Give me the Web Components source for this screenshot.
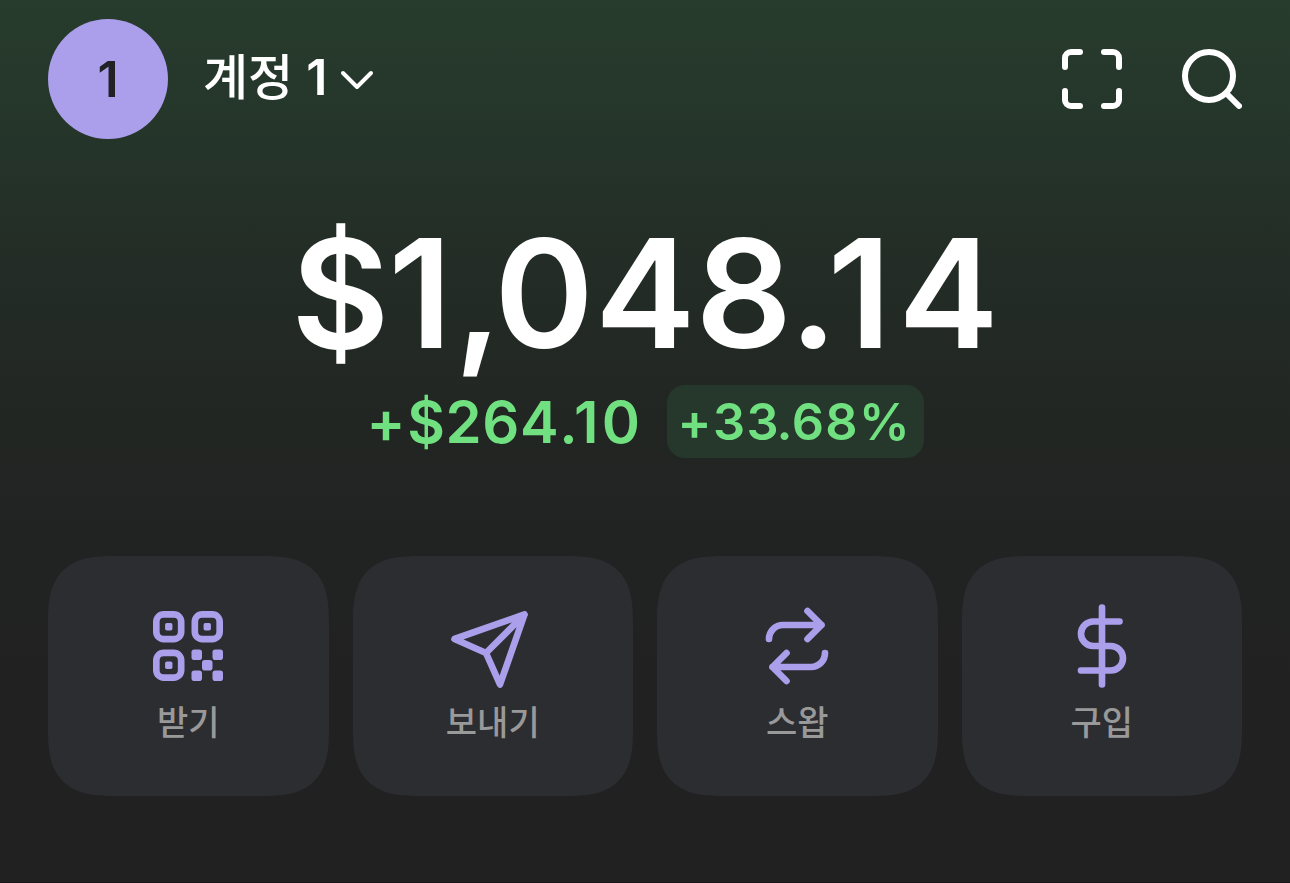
<!DOCTYPE html>
<html lang="ko">
<head>
<meta charset="utf-8">
<title>계정 1</title>
<style>
  html, body { margin: 0; height: 100%; }
  body {
    background: #212121;
    font-family: Inter, "Noto Sans CJK KR", sans-serif;
    overflow: hidden;
  }
</style>
</head>
<body>
<wallet-home>
  <account-bar slot="header" badge="1">계정 <b>1</b></account-bar>
  <balance-view slot="balance" total="$1,048.14" change="+$264.10" percent="+33.68%"></balance-view>
  <action-tile icon="qr">받기</action-tile>
  <action-tile icon="send">보내기</action-tile>
  <action-tile icon="swap">스왑</action-tile>
  <action-tile icon="dollar">구입</action-tile>
</wallet-home>

<script>
(function () {
  // action icons, 24x24 grid
  const ICONS = {
    qr:
      '<g stroke-width="1.9"><rect x="2.95" y="2.95" width="7.1" height="7.1" rx="2.1"/>' +
      '<rect x="13.95" y="2.95" width="7.1" height="7.1" rx="2.1"/>' +
      '<rect x="2.95" y="13.95" width="7.1" height="7.1" rx="2.1"/></g>' +
      '<g fill="currentColor" stroke="none">' +
      '<rect x="5.45" y="5.45" width="2.1" height="2.1" rx=".5"/>' +
      '<rect x="16.45" y="5.45" width="2.1" height="2.1" rx=".5"/>' +
      '<rect x="5.45" y="16.45" width="2.1" height="2.1" rx=".5"/>' +
      '<rect x="13" y="13" width="3" height="3" rx=".8"/>' +
      '<rect x="19" y="13" width="3" height="3" rx=".8"/>' +
      '<rect x="16" y="16" width="3" height="3" rx=".8"/>' +
      '<rect x="13" y="19" width="3" height="3" rx=".8"/>' +
      '<rect x="19" y="19" width="3" height="3" rx=".8"/></g>',
    send: '<path d="M21 3 14 23 10 14 1 10ZM21 3 10 14"/>',
    swap:
      '<path d="M4 10a4 4 0 0 1 4-4h11M15 2l4 4-4 4"/>' +
      '<path d="M20 14a4 4 0 0 1-4 4H5M9 14l-4 4 4 4"/>',
    dollar: '<path d="M12 1v22M17 5H9.5a3.5 3.5 0 0 0 0 7h5a3.5 3.5 0 0 1 0 7H6"/>'
  };

  // pair spacing for the amounts, in em
  const PAIRS = {
    '$1': -.007, '1,': .013, ',0': -.053, '04': .007, '8.': -.02,
    '.1': -.066, '14': .046, '10': .055, '+$': .03, '3.': -.04, '.6': -.02
  };

  function spaced(text) {
    let out = '';
    for (let i = 0; i < text.length; i++) {
      const k = PAIRS[text.substr(i, 2)];
      out += k ? '<span style="letter-spacing:' + k + 'em">' + text[i] + '</span>' : text[i];
    }
    return out;
  }

  class WalletHome extends HTMLElement {
    connectedCallback() {
      const root = this.attachShadow({ mode: 'open' });
      root.innerHTML =
        '<style>' +
          ':host{display:flex;flex-direction:column;box-sizing:border-box;height:883px;padding:19px 48px 0;' +
            'background:linear-gradient(#273c2d 0,#25352a 130px,#232c26 270px,#222623 420px,#212322 540px,#212121 680px,#212121 100%);' +
            'border-bottom:1px solid #17141a}' +
          '.actions{display:grid;grid-template-columns:repeat(4,1fr);gap:24px;margin-top:98px}' +
        '</style>' +
        '<slot name="header"></slot>' +
        '<slot name="balance"></slot>' +
        '<div class="actions"><slot></slot></div>';
    }
  }

  class AccountBar extends HTMLElement {
    connectedCallback() {
      const root = this.attachShadow({ mode: 'open' });
      root.innerHTML =
        '<style>' +
          ':host{display:flex;align-items:center;height:120px;color:#fff}' +
          'svg{display:block;fill:none;stroke:currentColor;stroke-linecap:round;stroke-linejoin:round}' +
          '.avatar{width:120px;height:120px;border-radius:50%;background:#ab9fec;color:#212226;' +
            'font-size:50px;font-weight:600;line-height:121px;text-align:center}' +
          '.name{margin-left:35px;padding-bottom:4px;font-size:49px;font-weight:500;line-height:60px;white-space:nowrap}' +
          '::slotted(b){font-size:50px;font-weight:600}' +
          '.chevron{margin-left:13px;padding-top:2px}' +
          '.tools{display:flex;gap:60px;margin-left:auto}' +
        '</style>' +
        '<div class="avatar">' + this.getAttribute('badge') + '</div>' +
        '<div class="name"><slot></slot></div>' +
        '<svg class="chevron" width="34" height="20" viewBox="0 0 34 20" stroke-width="4"><path d="m3 3 14 14L31 3"/></svg>' +
        '<div class="tools">' +
          '<svg width="60" height="60" viewBox="0 0 60 60" stroke-width="6">' +
            '<path d="M18 3H9a6 6 0 0 0-6 6v9M42 3h9a6 6 0 0 1 6 6v9M3 42v9a6 6 0 0 0 6 6h9M57 42v9a6 6 0 0 1-6 6h-9"/></svg>' +
          '<svg width="60" height="60" viewBox="0 0 60 60" stroke-width="6">' +
            '<circle cx="27" cy="27" r="24"/><path d="m44.500 44.500 12.500 12.500"/></svg>' +
        '</div>';
    }
  }

  class BalanceView extends HTMLElement {
    connectedCallback() {
      const root = this.attachShadow({ mode: 'open' });
      root.innerHTML =
        '<style>' +
          ':host{display:flex;flex-direction:column;align-items:center;margin-top:64px;white-space:nowrap;font-kerning:none}' +
          '.total{color:#fff;font-size:151px;font-weight:600;line-height:180px}' +
          '.row{display:flex;align-items:center;gap:26px;height:73px;margin-top:2px;color:#70e080}' +
          '.change{padding-top:2px;font-size:58px;font-weight:600;line-height:71px;letter-spacing:.6px}' +
          '.percent{box-sizing:border-box;width:257px;height:73px;padding-left:11px;border-radius:18px;background:#26382b;' +
            'font-size:50.5px;font-weight:560;line-height:74px;letter-spacing:1.4px}' +
        '</style>' +
        '<div class="total">' + spaced(this.getAttribute('total')) + '</div>' +
        '<div class="row">' +
          '<div class="change">' + spaced(this.getAttribute('change')) + '</div>' +
          '<div class="percent">' + spaced(this.getAttribute('percent')) + '</div>' +
        '</div>';
    }
  }

  class ActionTile extends HTMLElement {
    connectedCallback() {
      const root = this.attachShadow({ mode: 'open' });
      root.innerHTML =
        '<style>' +
          ':host{display:flex;flex-direction:column;align-items:center;box-sizing:border-box;height:240px;' +
            'padding-top:48px;border-radius:50px;background:#2c2d31;color:#999}' +
          '@supports (corner-shape:squircle){:host{border-radius:68px;corner-shape:superellipse(1.5)}}' +
          'svg{display:block;width:84px;height:84px;fill:none;stroke:currentColor;stroke-width:1.9;' +
            'stroke-linecap:round;stroke-linejoin:round;color:#ab9fec}' +
          '.label{margin-top:8px;font:500 34px/50px "Noto Sans CJK KR",sans-serif}' +
        '</style>' +
        '<svg viewBox="0 0 24 24">' + (ICONS[this.getAttribute('icon')] || '') + '</svg>' +
        '<div class="label"><slot></slot></div>';
    }
  }

  customElements.define('wallet-home', WalletHome);
  customElements.define('account-bar', AccountBar);
  customElements.define('balance-view', BalanceView);
  customElements.define('action-tile', ActionTile);
})();
</script>
</body>
</html>
